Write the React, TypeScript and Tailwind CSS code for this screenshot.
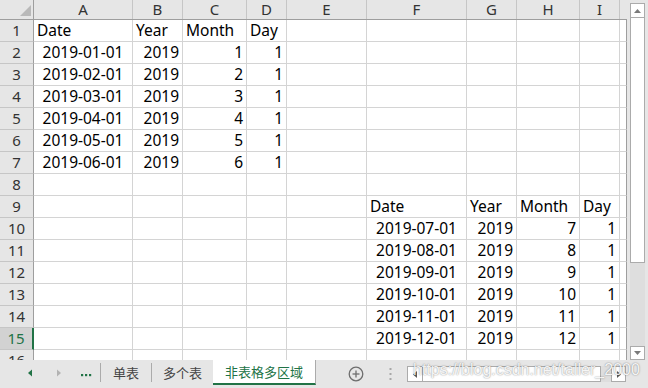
type Cell = { t: string; a: "l" | "r" | "c" };

const colW = [
  "w-[99px]",
  "w-[50px]",
  "w-[64px]",
  "w-[40px]",
  "w-[80px]",
  "w-[100px]",
  "w-[50px]",
  "w-[63px]",
  "w-[40px]",
];
const letters = ["A", "B", "C", "D", "E", "F", "G", "H", "I"];

const alignCls = {
  l: "justify-start pl-[3px]",
  r: "justify-end pr-[3px]",
  c: "justify-center",
};

function buildRows() {
  const rows: (Cell | null)[][] = Array.from({ length: 16 }, () => Array(9).fill(null));
  const head = ["Date", "Year", "Month", "Day"];
  head.forEach((h, i) => {
    rows[0][i] = { t: h, a: "l" };
    rows[8][5 + i] = { t: h, a: "l" };
  });
  for (let m = 1; m <= 6; m++) {
    const r = rows[m];
    r[0] = { t: `2019-0${m}-01`, a: "c" };
    r[1] = { t: "2019", a: "r" };
    r[2] = { t: String(m), a: "r" };
    r[3] = { t: "1", a: "r" };
  }
  for (let m = 7; m <= 12; m++) {
    const r = rows[m + 2];
    r[5] = { t: `2019-${m < 10 ? "0" + m : m}-01`, a: "c" };
    r[6] = { t: "2019", a: "r" };
    r[7] = { t: String(m), a: "r" };
    r[8] = { t: "1", a: "r" };
  }
  return rows;
}

const rows = buildRows();

const Grid = () => (
  <div className="w-[627px] h-[360px] overflow-hidden bg-white">
    {/* column headers */}
    <div className="flex h-[20px] bg-[#e6e6e6] border-b border-[#9e9e9e] text-[15px] text-[#333]">
      <div className="w-[34px] h-full border-r border-[#9e9e9e]">
        <svg width="33" height="19">
          <polygon points="31,5 31,16 20,16" fill="#b9b9b9" />
        </svg>
      </div>
      {letters.map((l, i) => (
        <div key={l} className={`${colW[i]} h-full flex items-center justify-center border-r border-[#c6c6c6]`}>
          {l}
        </div>
      ))}
      <div className="w-[7px] h-full" />
    </div>

    {rows.map((r, ri) => {
      const active = ri === 14;
      return (
        <div key={ri} className="flex h-[22px]">
          <div
            className={
              active
                ? "w-[34px] h-full flex items-center justify-center bg-[#d2d2d2] text-[#217346] text-[15px] border-b border-b-[#c6c6c6] border-r-2 border-r-[#217346]"
                : "w-[34px] h-full flex items-center justify-center bg-[#e6e6e6] text-[#333] text-[15px] border-b border-b-[#c6c6c6] border-r border-r-[#9e9e9e]"
            }
          >
            {ri + 1}
          </div>
          {r.map((c, ci) => (
            <div
              key={ci}
              className={`${colW[ci]} h-full flex items-center border-r border-b border-[#d4d4d4] text-[15.5px] text-black ${c ? alignCls[c.a] : ""}`}
            >
              {c?.t}
            </div>
          ))}
          <div className="w-[7px] h-full border-b border-[#d4d4d4] border-r border-r-[#9e9e9e]" />
        </div>
      );
    })}
  </div>
);

const VScroll = () => (
  <div className="w-[21px] h-[360px] bg-[#e6e6e6] pl-[3px] pt-[3px]">
    <div className="w-[15px] h-[357px] flex flex-col">
      <div className="h-[15px] bg-white border border-[#ababab] flex items-center justify-center">
        <svg width="7" height="4">
          <polygon points="0,4 3.5,0 7,4" fill="#7a7a7a" />
        </svg>
      </div>
      <div className="h-[245px] bg-white border-x border-b border-[#ababab]" />
      <div className="flex-1 bg-[#dedede]" />
      <div className="h-[14px] bg-white border border-[#ababab] flex items-center justify-center">
        <svg width="7" height="4">
          <polygon points="0,0 3.5,4 7,0" fill="#7a7a7a" />
        </svg>
      </div>
    </div>
  </div>
);

const TabBar = () => (
  <div className="relative flex h-[28px] bg-[#e6e6e6] font-['Noto_Sans_CJK_SC',sans-serif] text-[13px]">
    <div className="flex items-center h-[25px]">
      <svg width="100" height="25">
        <polygon points="32,9.5 28,13 32,16.5" fill="#217346" />
        <polygon points="57,9.5 61,13 57,16.5" fill="#b3b3b3" />
        <rect x="81" y="14" width="2.2" height="2.2" fill="#217346" />
        <rect x="85" y="14" width="2.2" height="2.2" fill="#217346" />
        <rect x="89" y="14" width="2.2" height="2.2" fill="#217346" />
      </svg>
      <div className="w-px h-[19px] bg-[#ababab]" />
      <div className="w-[50px] h-full flex items-center justify-center text-[#444]">单表</div>
      <div className="w-px h-[19px] bg-[#ababab]" />
      <div className="w-[61px] h-full flex items-center justify-center text-[#444]">多个表</div>
      <div className="w-[103px] h-full flex items-center justify-center bg-white text-[#217346] border-r border-[#ababab] border-b-2 border-b-[#217346]">
        非表格多区域
      </div>
    </div>
    <div className="flex items-center ml-[32px]">
      <svg width="16" height="16">
        <circle cx="8" cy="8" r="6.8" fill="none" stroke="#6e6e6e" strokeWidth="1.3" />
        <line x1="8" y1="4.5" x2="8" y2="11.5" stroke="#6e6e6e" strokeWidth="1.3" />
        <line x1="4.5" y1="8" x2="11.5" y2="8" stroke="#6e6e6e" strokeWidth="1.3" />
      </svg>
    </div>
    <div className="flex items-center ml-[25px]">
      <svg width="3" height="14">
        <rect x="0.5" y="1" width="2" height="2" fill="#a8a8a8" />
        <rect x="0.5" y="6" width="2" height="2" fill="#a8a8a8" />
        <rect x="0.5" y="11" width="2" height="2" fill="#a8a8a8" />
      </svg>
    </div>
    <div className="flex items-center ml-[15px]">
      <div className="w-[219px] h-[16px] flex">
        <div className="w-[16px] h-full bg-white border border-[#ababab] flex items-center justify-center">
          <svg width="4" height="7">
            <polygon points="4,0 0,3.5 4,7" fill="#5a5a5a" />
          </svg>
        </div>
        <div className="w-[178px] h-full bg-white border-y border-r border-[#ababab]" />
        <div className="flex-1 h-full bg-[#dedede]" />
        <div className="w-[15px] h-full bg-white border border-[#ababab] flex items-center justify-center">
          <svg width="4" height="7">
            <polygon points="0,0 4,3.5 0,7" fill="#5a5a5a" />
          </svg>
        </div>
      </div>
    </div>
    <div className="absolute left-[413px] top-[2px] leading-[16px] text-[16px] font-['Liberation_Sans',sans-serif] text-white/90 [text-shadow:0_0_1.5px_rgba(0,0,0,0.55)] whitespace-nowrap">
      https://blog.csdn.net/taller_2000
    </div>
  </div>
);

export default function App() {
  return (
    <div className="w-[648px] h-[388px] overflow-hidden bg-[#e6e6e6] font-['Noto_Sans',sans-serif]">
      <div className="flex">
        <Grid />
        <VScroll />
      </div>
      <TabBar />
    </div>
  );
}
